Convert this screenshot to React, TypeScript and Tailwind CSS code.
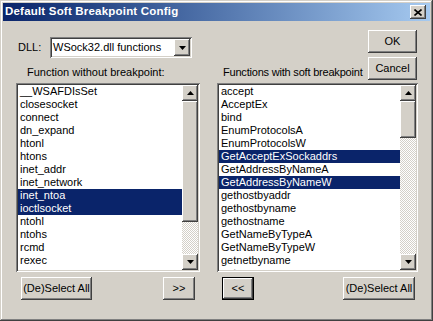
import React from "react"

const raised =
  "shadow-[inset_-1px_-1px_#404040,inset_1px_1px_#ffffff,inset_-2px_-2px_#808080,inset_2px_2px_#d4d0c8]"
const sunken =
  "shadow-[inset_1px_1px_#808080,inset_-1px_-1px_#ffffff,inset_2px_2px_#404040,inset_-2px_-2px_#d4d0c8]"

const leftItems = [
  "__WSAFDIsSet",
  "closesocket",
  "connect",
  "dn_expand",
  "htonl",
  "htons",
  "inet_addr",
  "inet_network",
  "inet_ntoa",
  "ioctlsocket",
  "ntohl",
  "ntohs",
  "rcmd",
  "rexec",
]

const rightItems = [
  "accept",
  "AcceptEx",
  "bind",
  "EnumProtocolsA",
  "EnumProtocolsW",
  "GetAcceptExSockaddrs",
  "GetAddressByNameA",
  "GetAddressByNameW",
  "gethostbyaddr",
  "gethostbyname",
  "gethostname",
  "GetNameByTypeA",
  "GetNameByTypeW",
  "getnetbyname",
  "getpeername",
]

function Arrow({ down }: { down?: boolean }) {
  return (
    <svg width="7" height="4" viewBox="0 0 7 4" className="block">
      {down ? <polygon points="0,0 7,0 3.5,4" fill="#000" /> : <polygon points="0,4 7,4 3.5,0" fill="#000" />}
    </svg>
  )
}

function Button({ children, className = "" }: { children: React.ReactNode; className?: string }) {
  return (
    <div
      className={`h-[23px] flex items-center justify-center whitespace-nowrap bg-[#d4d0c8] ${raised} ${className}`}
    >
      {children}
    </div>
  )
}

function ListBox({
  items,
  selected,
  thumb,
  width,
}: {
  items: string[]
  selected: string[]
  thumb: string
  width: string
}) {
  return (
    <div className={`h-[189px] ${width} bg-white p-[2px] flex ${sunken}`}>
      <div className="flex-1 overflow-hidden">
        {items.map((it) => (
          <div
            key={it}
            className={`h-[13px] leading-[13px] pl-[2px] whitespace-nowrap ${
              selected.includes(it) ? "bg-[#0a246a] text-white" : ""
            }`}
          >
            {it}
          </div>
        ))}
      </div>
      <div className="w-[16px] flex flex-col">
        <div className={`h-[16px] flex items-center justify-center bg-[#d4d0c8] ${raised}`}>
          <Arrow />
        </div>
        <div className="flex-1 bg-[repeating-conic-gradient(#d4d0c8_0_25%,#ffffff_0_50%)] bg-[length:2px_2px]">
          <div className={`${thumb} bg-[#d4d0c8] ${raised}`} />
        </div>
        <div className={`h-[16px] flex items-center justify-center bg-[#d4d0c8] ${raised}`}>
          <Arrow down />
        </div>
      </div>
    </div>
  )
}

export default function App() {
  return (
    <div className="w-[433px] h-[321px] bg-[#d4d0c8] p-[3px] shadow-[inset_-1px_-1px_#404040,inset_1px_1px_#d4d0c8,inset_-2px_-2px_#808080,inset_2px_2px_#ffffff] font-['Liberation_Sans',Arial,sans-serif] text-[11px] text-black">
      <div className="h-[18px] flex items-center justify-between pl-[2px] pr-[4px] bg-gradient-to-r from-[#0a246a] to-[#a6caf0]">
        <span className="text-white font-bold text-[11.5px] tracking-[0.2px]">Default Soft Breakpoint Config</span>
        <div className={`w-[16px] h-[14px] flex items-center justify-center bg-[#d4d0c8] ${raised}`}>
          <svg width="8" height="7" viewBox="0 0 8 7">
            <path d="M0.5 0.5 L7.5 6.5 M7.5 0.5 L0.5 6.5" stroke="#000" strokeWidth="1.6" />
          </svg>
        </div>
      </div>

      <div className="flex gap-[17px] px-[13px] pt-[11px]">
        <div className="w-[184px] flex flex-col">
          <div className="h-[51px] flex flex-col">
            <div className="mt-[5px] h-[21px] flex items-center">
              <span className="ml-[2px] w-[32px]">DLL:</span>
              <div className={`w-[142px] h-[21px] bg-white p-[2px] flex ${sunken}`}>
                <span className="flex-1 pl-[1px] leading-[17px] whitespace-nowrap">WSock32.dll functions</span>
                <div className={`w-[16px] h-[17px] flex items-center justify-center bg-[#d4d0c8] ${raised}`}>
                  <Arrow down />
                </div>
              </div>
            </div>
            <div className="mt-auto mb-[4px] pl-[11px] leading-[13px] whitespace-nowrap">
              Function without breakpoint:
            </div>
          </div>
          <ListBox
            items={leftItems}
            selected={["inet_ntoa", "ioctlsocket"]}
            thumb="h-[121px]"
            width="w-[184px]"
          />
          <div className="mt-[5px] flex justify-between px-[5px]">
            <Button className="w-[71px]">(De)Select All</Button>
            <Button className="w-[32px]">&gt;&gt;</Button>
          </div>
        </div>

        <div className="w-[201px] flex flex-col">
          <div className="h-[51px] flex items-end justify-between">
            <div className="mb-[4px] pl-[6px] leading-[13px] whitespace-nowrap tracking-[-0.2px]">
              Functions with soft breakpoint
            </div>
            <div className="w-[49px] shrink-0 mr-[1px] flex flex-col gap-[4px] mb-[3px]">
              <Button className="h-[22px]">OK</Button>
              <Button className="h-[22px]">Cancel</Button>
            </div>
          </div>
          <ListBox
            items={rightItems}
            selected={["GetAcceptExSockaddrs", "GetAddressByNameW"]}
            thumb="h-[37px]"
            width="w-[201px]"
          />
          <div className="mt-[5px] flex justify-between pl-[5px] pr-[3px]">
            <div className="w-[32px] h-[23px] border border-black">
              <div className={`h-full flex items-center justify-center bg-[#d4d0c8] ${raised}`}>&lt;&lt;</div>
            </div>
            <Button className="w-[72px]">(De)Select All</Button>
          </div>
        </div>
      </div>
    </div>
  )
}
